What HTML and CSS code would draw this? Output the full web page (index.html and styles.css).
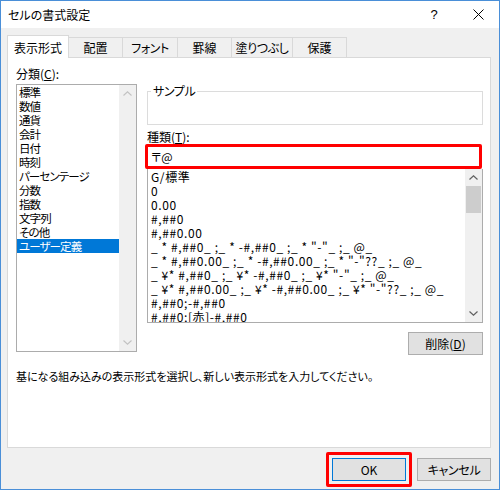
FILE: index.html
```html
<!DOCTYPE html>
<html lang="ja">
<head>
<meta charset="utf-8">
<title>セルの書式設定</title>
<link rel="stylesheet" href="styles.css">
</head>
<body>
<div class="window">
  <div class="titlebar">
    <span class="title">セルの書式設定</span>
    <span class="help">?</span>
    <span class="close"><svg width="11" height="11" viewBox="0 0 11 11"><path d="M0.5 0.5L10.5 10.5M10.5 0.5L0.5 10.5" stroke="#000" stroke-width="1" fill="none"/></svg></span>
  </div>
  <div class="body">
    <div class="tabs">
      <div class="tab active t1">表示形式</div>
      <div class="tab t2">配置</div>
      <div class="tab t3">フォント</div>
      <div class="tab t4">罫線</div>
      <div class="tab t5">塗りつぶし</div>
      <div class="tab t6">保護</div>
    </div>
    <div class="panel">
      <div class="main">
        <div class="leftcol">
          <div class="label">分類(<u>C</u>):</div>
          <div class="listbox cat">
            <ul class="items">
              <li>標準</li>
              <li>数値</li>
              <li>通貨</li>
              <li>会計</li>
              <li>日付</li>
              <li>時刻</li>
              <li>パーセンテージ</li>
              <li>分数</li>
              <li>指数</li>
              <li>文字列</li>
              <li>その他</li>
              <li class="sel">ユーザー定義</li>
            </ul>
            <div class="vscroll">
              <div class="arrow"><svg width="9" height="5" viewBox="0 0 9 5"><path d="M0.5 4.5L4.5 0.8L8.5 4.5" stroke="#c2c2c2" stroke-width="1.1" fill="none"/></svg></div>
              <div class="track"></div>
              <div class="arrow"><svg width="9" height="5" viewBox="0 0 9 5"><path d="M0.5 0.5L4.5 4.2L8.5 0.5" stroke="#c2c2c2" stroke-width="1.1" fill="none"/></svg></div>
            </div>
          </div>
        </div>
        <div class="rightcol">
          <fieldset class="sample">
            <legend>サンプル</legend>
            <div class="sample-body"></div>
          </fieldset>
          <div class="label kind">種類(<u>T</u>):</div>
          <div class="input">〒@</div>
          <div class="listbox fmt">
            <ul class="items">
              <li>G/標準</li>
              <li>0</li>
              <li>0.00</li>
              <li>#,##0</li>
              <li>#,##0.00</li>
              <li>_ * #,##0_ ;_ * -#,##0_ ;_ * "-"_ ;_ @_</li>
              <li>_ * #,##0.00_ ;_ * -#,##0.00_ ;_ * "-"??_ ;_ @_</li>
              <li>_ ¥* #,##0_ ;_ ¥* -#,##0_ ;_ ¥* "-"_ ;_ @_</li>
              <li>_ ¥* #,##0.00_ ;_ ¥* -#,##0.00_ ;_ ¥* "-"??_ ;_ @_</li>
              <li>#,##0;-#,##0</li>
              <li>#,##0;[赤]-#,##0</li>
            </ul>
            <div class="vscroll">
              <div class="arrow"><svg width="9" height="5" viewBox="0 0 9 5"><path d="M0.5 4.5L4.5 0.8L8.5 4.5" stroke="#606060" stroke-width="1.2" fill="none"/></svg></div>
              <div class="thumb"></div>
              <div class="track"></div>
              <div class="arrow"><svg width="9" height="5" viewBox="0 0 9 5"><path d="M0.5 0.5L4.5 4.2L8.5 0.5" stroke="#606060" stroke-width="1.2" fill="none"/></svg></div>
            </div>
          </div>
          <div class="btn del">削除(<u>D</u>)</div>
        </div>
      </div>
      <div class="desc">基になる組み込みの表示形式を選択し、新しい表示形式を入力してください。</div>
    </div>
    <div class="footer">
      <div class="mark"><div class="btn ok">OK</div></div>
      <div class="btn cancel">キャンセル</div>
    </div>
  </div>
</div>
</body>
</html>
```
FILE: styles.css
```css
* { box-sizing: border-box; }
html, body { margin: 0; padding: 0; }
body {
  width: 500px;
  height: 490px;
  overflow: hidden;
  font-family: "Noto Sans CJK JP", "Noto Sans", sans-serif;
  font-size: 12px;
  font-feature-settings: "palt" 1;
  color: #000;
  background: #f0f0f0;
}
.window {
  width: 500px;
  height: 490px;
  border: 1px solid #4a8fd8;
  background: #f0f0f0;
  display: flex;
  flex-direction: column;
}
.titlebar {
  height: 27px;
  background: #fff;
  display: flex;
  align-items: center;
}
.title { padding-left: 7px; flex: 1; line-height: 27px; }
.help {
  width: 46px;
  text-align: center;
  font-size: 13px;
  font-family: "Liberation Sans", sans-serif;
}
.close {
  width: 42px;
  height: 27px;
  display: flex;
  align-items: center;
  justify-content: center;
}
.close svg { display: block; }
.body {
  flex: 1;
  padding: 7px 8px 0 6px;
  display: flex;
  flex-direction: column;
}
.tabs {
  display: flex;
  align-items: flex-end;
  height: 22px;
}
.tab {
  height: 20px;
  border: 1px solid #d9d9d9;
  border-bottom: none;
  background: #f0f0f0;
  display: flex;
  align-items: center;
  justify-content: center;
  margin-left: -1px;
}
.tab.active {
  height: 23px;
  margin-bottom: -1px;
  margin-left: 0;
  background: #fff;
  position: relative;
  z-index: 1;
}
.t1 { width: 62px; }
.t2 { width: 55px; }
.t3 { width: 56px; letter-spacing: -0.4px; }
.t4 { width: 55px; }
.t5 { width: 62px; letter-spacing: -0.4px; }
.t6 { width: 55px; }
.panel {
  width: 484px;
  height: 391px;
  border: 1px solid #d9d9d9;
  background: #fff;
  padding: 8px 7px 0 8px;
  display: flex;
  flex-direction: column;
}
.main {
  display: flex;
  gap: 10px;
}
.leftcol { width: 121px; display: flex; flex-direction: column; }
.rightcol { width: 336px; display: flex; flex-direction: column; }
.label { line-height: 16px; height: 16px; }
.listbox {
  display: flex;
  border: 1px solid #acacac;
  background: #fff;
}
.cat { height: 268px; margin-top: 2px; }
.items {
  list-style: none;
  margin: 0;
  padding: 0;
  flex: 1;
  min-width: 0;
  overflow: hidden;
}
.items li {
  height: 14px;
  line-height: 14px;
  white-space: nowrap;
}
.cat .items li {
  padding-left: 2px;
  font-size: 11.5px;
  letter-spacing: -0.9px;
}
.cat .items li.sel { background: #0078d7; color: #fff; }
.vscroll {
  width: 17px;
  background: #f0f0f0;
  display: flex;
  flex-direction: column;
}
.arrow {
  height: 17px;
  display: flex;
  align-items: center;
  justify-content: center;
}
.arrow svg { display: block; }
.track { flex: 1; }
.thumb { height: 27px; margin: 0 1px; background: #cdcdcd; }
.sample {
  margin: 18px 0 0 0;
  padding: 0 3px;
  border: 1px solid #dcdcdc;
  min-width: 0;
}
.sample legend {
  padding: 0 2px;
  line-height: 14px;
  height: 14px;
  letter-spacing: -0.4px;
}
.sample-body { height: 26px; }
.kind { margin-top: 5px; line-height: 14px; height: 14px; }
.input {
  margin-left: -2px;
  width: 337px;
  height: 25px;
  border: 3px solid #ff0000;
  border-radius: 2px;
  padding-left: 3px;
  line-height: 19px;
  background: #fff;
}
.fmt { height: 154px; border-top: none; }
.fmt .items { padding-top: 1px; }
.fmt .items li { padding-left: 3px; letter-spacing: 0.6px; }
.btn {
  height: 23px;
  background: #e1e1e1;
  border: 1px solid #adadad;
  display: flex;
  align-items: center;
  justify-content: center;
}
.del { width: 75px; margin-top: 9px; align-self: flex-end; }
.desc { margin-top: 13px; line-height: 16px; font-size: 11px; }
.footer {
  display: flex;
  justify-content: flex-end;
  align-items: center;
  gap: 5px;
  margin-top: 4px;
}
.mark {
  border: 3px solid #ff0000;
  border-radius: 2px;
  padding: 3px;
}
.ok { width: 74px; border-color: #0078d7; }
.cancel { width: 74px; letter-spacing: -0.3px; }
```
